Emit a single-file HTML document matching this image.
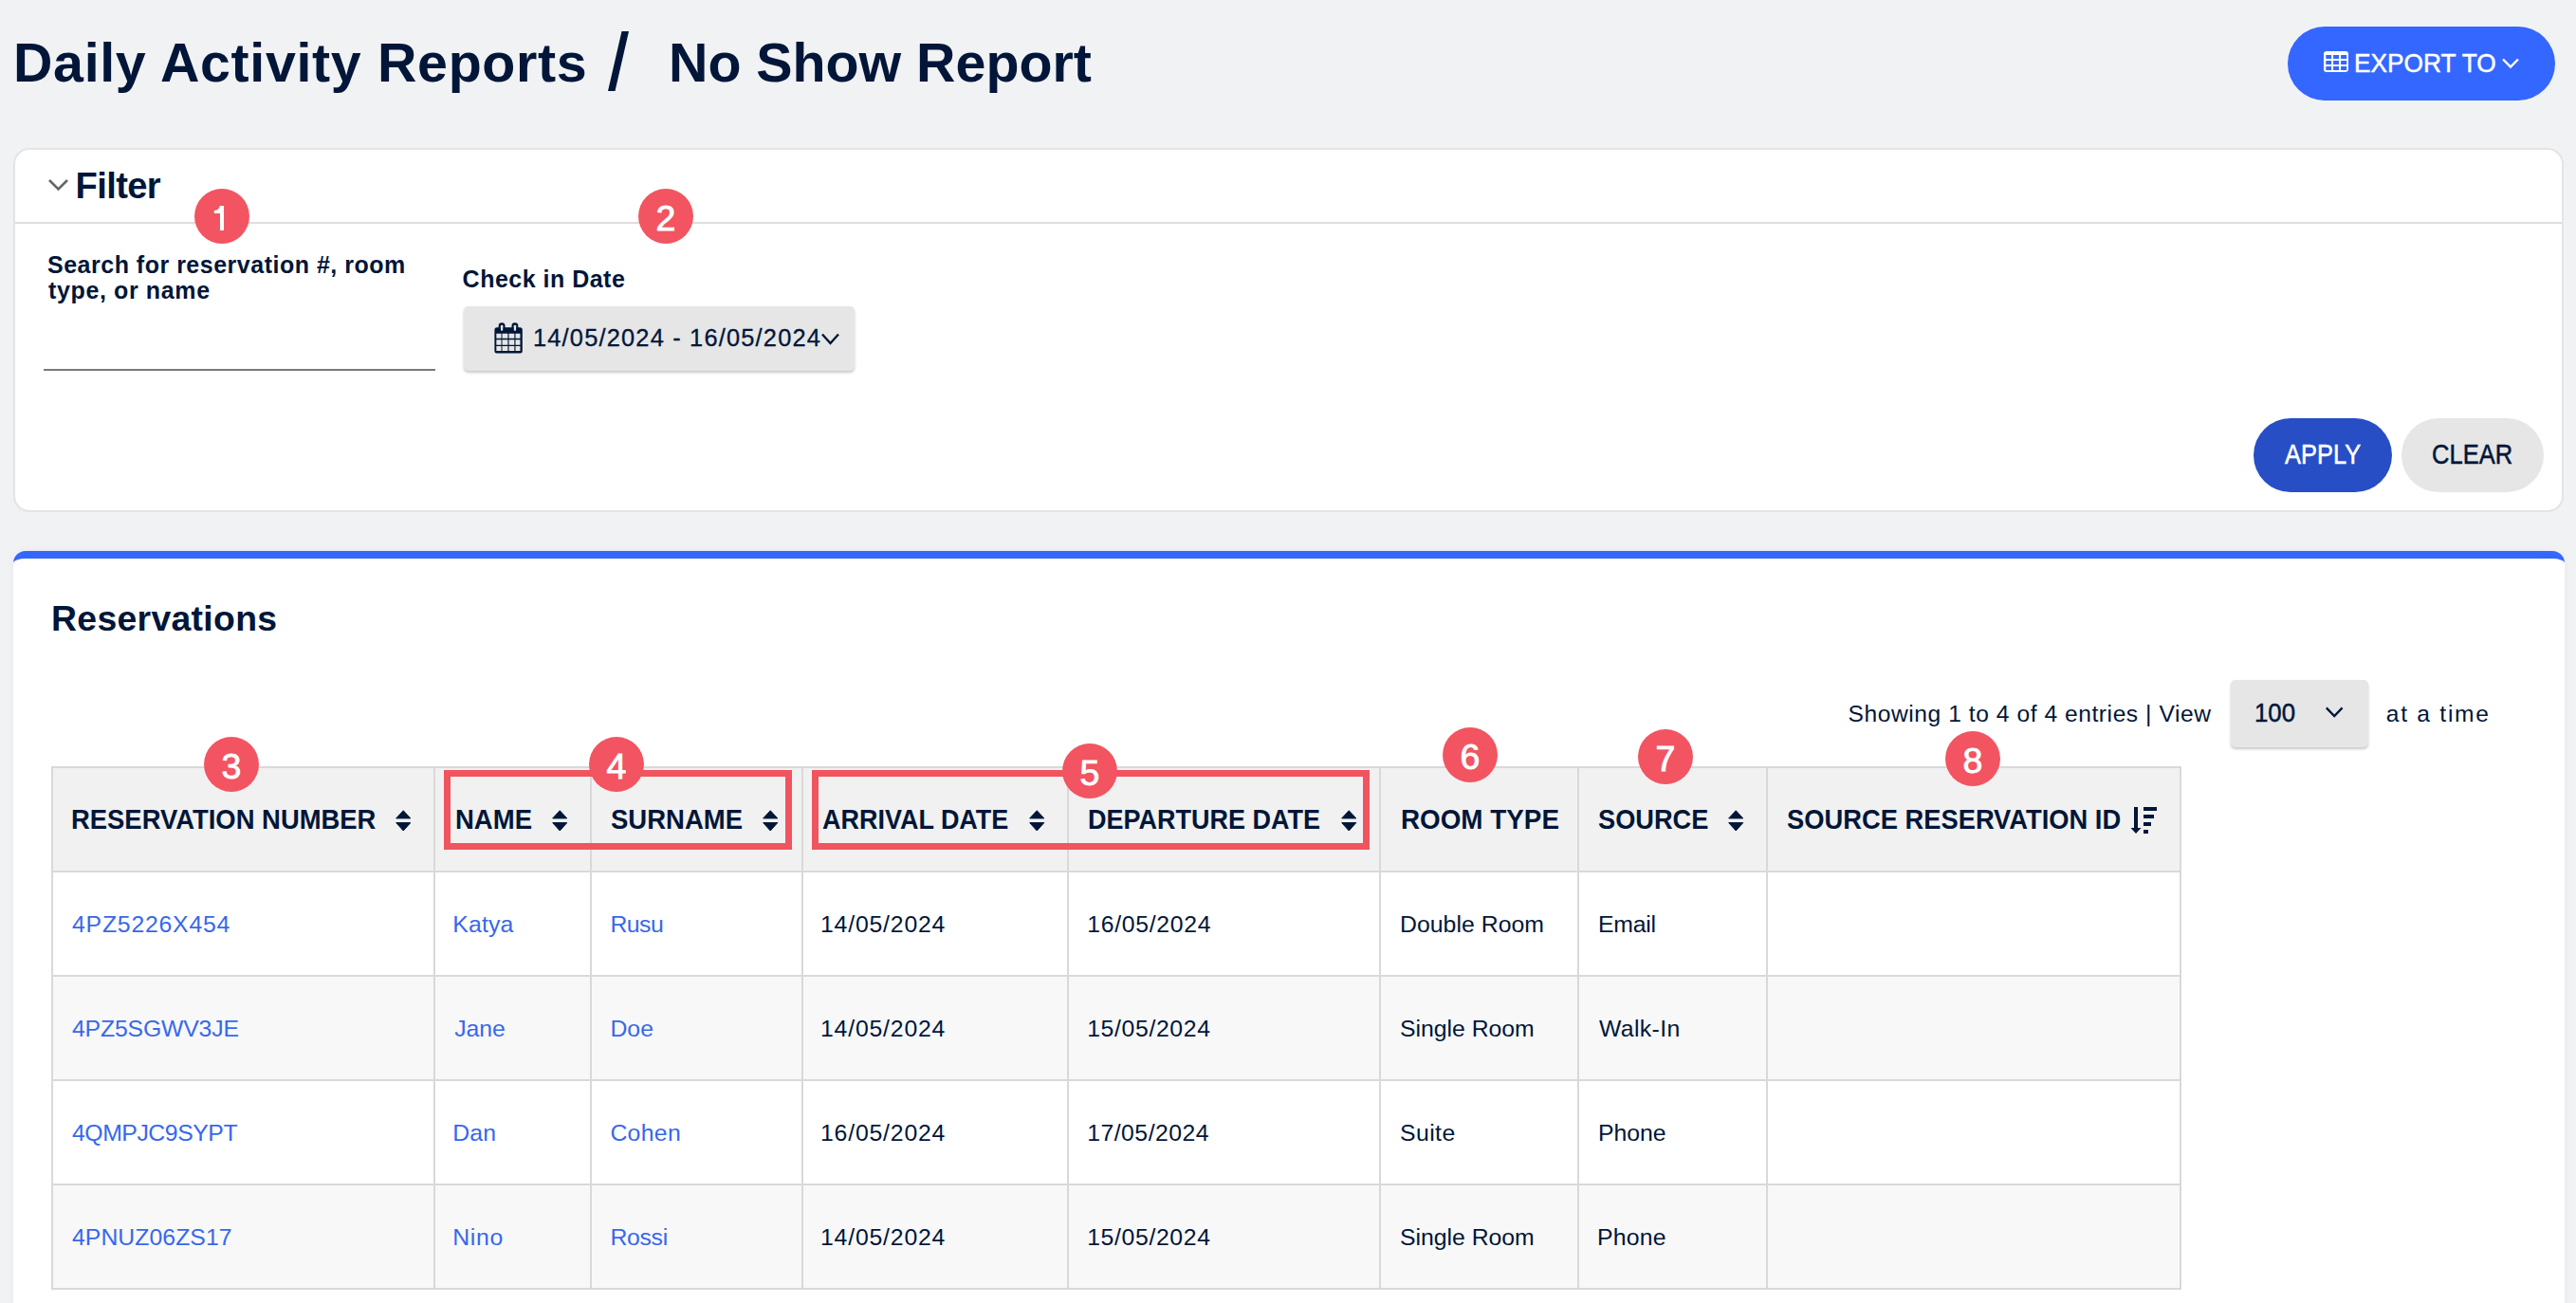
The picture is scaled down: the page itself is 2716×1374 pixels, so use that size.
<!DOCTYPE html>
<html><head><meta charset="utf-8"><style>
html,body{margin:0;padding:0;}
body{width:2716px;height:1374px;position:relative;overflow:hidden;background:#f1f2f4;font-family:"Liberation Sans",sans-serif;}
.t{position:absolute;white-space:nowrap;}
.abs{position:absolute;}
.badge{position:absolute;width:58px;height:58px;border-radius:50%;background:#f25461;}
</style></head><body>
<div class="t" style="left:14.00px;top:37.82px;font-size:57.39px;line-height:57.39px;letter-spacing:0.657px;font-weight:700;color:#011638;">Daily Activity Reports</div>
<div class="abs" style="left:641px;top:32.8px;width:22px;height:63px;"><svg width="22" height="63" viewBox="0 0 22 63"><polygon points="14.5,0 22,0 7.5,63 0,63" fill="#011638"/></svg></div>
<div class="t" style="left:705.00px;top:37.82px;font-size:57.39px;line-height:57.39px;letter-spacing:-0.031px;font-weight:700;color:#011638;">No Show Report</div>
<div class="abs" style="left:2412px;top:28px;width:282px;height:78px;border-radius:39px;background:#3467ff;"></div>
<svg class="abs" style="left:2449.7px;top:53.9px" width="26.1" height="21.9" viewBox="0 0 26.1 21.9"><path fill="#fff" fill-rule="evenodd" d="M3,0 H23.1 A3,3 0 0 1 26.1,3 V18.9 A3,3 0 0 1 23.1,21.9 H3 A3,3 0 0 1 0,18.9 V3 A3,3 0 0 1 3,0 Z M2.3,4.1 V8 H8.1 V4.1 Z M10.1,4.1 V8 H16.1 V4.1 Z M18.1,4.1 V8 H24.2 V4.1 Z M2.3,10.1 V14 H8.1 V10.1 Z M10.1,10.1 V14 H16.1 V10.1 Z M18.1,10.1 V14 H24.2 V10.1 Z M2.3,16.1 V20 H8.1 V16.1 Z M10.1,16.1 V20 H16.1 V16.1 Z M18.1,16.1 V20 H24.2 V16.1 Z"/></svg>
<div class="t" style="left:2482.00px;top:51.98px;font-size:28.26px;line-height:28.26px;letter-spacing:0.000px;font-weight:400;color:#fff;transform:scaleX(0.9288);transform-origin:0 0;-webkit-text-stroke:0.5px #fff;">EXPORT TO</div>
<svg class="abs" style="left:2637px;top:59px" width="20" height="15" viewBox="0 0 20 15"><polyline points="2,3.5 10,11.5 18,3.5" fill="none" stroke="#fff" stroke-width="2.4"/></svg>
<div class="abs" style="left:14px;top:156px;width:2685px;height:380px;border:2px solid #e3e4e6;border-radius:17px;background:#fff;"></div>
<div class="abs" style="left:16px;top:234px;width:2685px;height:2px;background:#dedede;"></div>
<svg class="abs" style="left:50px;top:186px" width="24" height="18" viewBox="0 0 24 18"><polyline points="2,4 11.5,13.5 21,4" fill="none" stroke="#666" stroke-width="2.6"/></svg>
<div class="t" style="left:79.60px;top:176.80px;font-size:38.12px;line-height:38.12px;letter-spacing:-0.620px;font-weight:700;color:#011638;">Filter</div>
<div class="t" style="left:50.00px;top:267.15px;font-size:25.00px;line-height:25.00px;letter-spacing:0.503px;font-weight:700;color:#011638;">Search for reservation #, room</div>
<div class="t" style="left:51.00px;top:293.65px;font-size:25.00px;line-height:25.00px;letter-spacing:0.625px;font-weight:700;color:#011638;">type, or name</div>
<div class="abs" style="left:46px;top:389px;width:413px;height:2px;background:#7a7a7a;"></div>
<div class="t" style="left:487.60px;top:282.45px;font-size:25.00px;line-height:25.00px;letter-spacing:0.492px;font-weight:700;color:#011638;">Check in Date</div>
<div class="abs" style="left:489px;top:323px;width:412px;height:68px;border-radius:5px;background:#e6e6e6;box-shadow:0 2px 3px rgba(0,0,0,0.22);"></div>
<svg class="abs" style="left:520.5px;top:340px" width="31" height="33" viewBox="0 0 31 33"><path fill="#011638" fill-rule="evenodd" d="M2.9,5.15 H27.3 A2.5,2.5 0 0 1 29.8,7.65 V29.9 A2.5,2.5 0 0 1 27.3,32.4 H2.9 A2.5,2.5 0 0 1 0.4,29.9 V7.65 A2.5,2.5 0 0 1 2.9,5.15 Z M2.35,11.86 H7.53 V16.85 H2.35 Z M8.49,11.86 H14.43 V16.85 H8.49 Z M15.58,11.86 H21.34 V16.85 H15.58 Z M22.49,11.86 H27.47 V16.85 H22.49 Z M2.35,18.19 H7.53 V23.75 H2.35 Z M8.49,18.19 H14.43 V23.75 H8.49 Z M15.58,18.19 H21.34 V23.75 H15.58 Z M22.49,18.19 H27.47 V23.75 H22.49 Z M2.35,25.1 H7.53 V29.9 H2.35 Z M8.49,25.1 H14.43 V29.9 H8.49 Z M15.58,25.1 H21.34 V29.9 H15.58 Z M22.49,25.1 H27.47 V29.9 H22.49 Z M6.8,5.15 H9.45 V8.8 H6.8 Z M20.6,5.15 H23.3 V8.8 H20.6 Z"/><path fill="#011638" fill-rule="evenodd" d="M8.100000000000001,0.36 A3.45,3.45 0 0 1 11.56,3.8 V6.2 A3,3 0 0 1 4.65,6.2 V3.8 A3.45,3.45 0 0 1 8.100000000000001,0.36 Z M7.9,2.85 A1.3,1.3 0 0 1 9.45,4.1 V7.8 A1.3,1.3 0 0 1 6.8,7.8 V4.1 A1.3,1.3 0 0 1 7.9,2.85 Z M21.91,0.36 A3.45,3.45 0 0 1 25.36,3.8 V6.2 A3,3 0 0 1 18.46,6.2 V3.8 A3.45,3.45 0 0 1 21.91,0.36 Z M21.95,2.85 A1.3,1.3 0 0 1 23.3,4.1 V7.8 A1.3,1.3 0 0 1 20.6,7.8 V4.1 A1.3,1.3 0 0 1 21.95,2.85 Z"/></svg>
<div class="t" style="left:562.00px;top:344.11px;font-size:25.40px;line-height:25.40px;letter-spacing:1.191px;font-weight:400;color:#011638;-webkit-text-stroke:0.3px #011638;">14/05/2024 - 16/05/2024</div>
<svg class="abs" style="left:864px;top:348px" width="22" height="18" viewBox="0 0 22 18"><polyline points="3,4.5 11.5,14 20,4.5" fill="none" stroke="#011638" stroke-width="2.4"/></svg>
<div class="abs" style="left:2376px;top:441px;width:146px;height:78px;border-radius:39px;background:#274ec5;"></div>
<div class="t" style="left:2409.00px;top:465.39px;font-size:28.84px;line-height:28.84px;letter-spacing:0.000px;font-weight:400;color:#fff;transform:scaleX(0.8820);transform-origin:0 0;-webkit-text-stroke:0.5px #fff;">APPLY</div>
<div class="abs" style="left:2532px;top:441px;width:150px;height:78px;border-radius:39px;background:#e6e6e6;"></div>
<div class="t" style="left:2564.00px;top:465.39px;font-size:28.84px;line-height:28.84px;letter-spacing:0.000px;font-weight:400;color:#011638;transform:scaleX(0.8854);transform-origin:0 0;-webkit-text-stroke:0.5px #011638;">CLEAR</div>
<div class="abs" style="left:14px;top:581px;width:2690px;height:900px;border-top:8px solid #3467ff;border-radius:13px;background:#fff;box-shadow:0 0 8px rgba(0,0,0,0.045);"></div>
<div class="t" style="left:54.00px;top:634.12px;font-size:37.39px;line-height:37.39px;letter-spacing:0.300px;font-weight:700;color:#011638;">Reservations</div>
<div class="t" style="left:1948.60px;top:740.79px;font-size:24.60px;line-height:24.60px;letter-spacing:0.552px;font-weight:400;color:#011638;">Showing 1 to 4 of 4 entries | View</div>
<div class="abs" style="left:2352px;top:717px;width:145px;height:71px;border-radius:5px;background:#e6e6e6;box-shadow:0 2px 3px rgba(0,0,0,0.22);"></div>
<div class="t" style="left:2377.00px;top:737.59px;font-size:27.54px;line-height:27.54px;letter-spacing:0.000px;font-weight:400;color:#011638;transform:scaleX(0.9368);transform-origin:0 0;-webkit-text-stroke:0.5px #011638;">100</div>
<svg class="abs" style="left:2450px;top:742px" width="22" height="18" viewBox="0 0 22 18"><polyline points="2.8,4.4 11.2,13.1 19.6,4.4" fill="none" stroke="#011638" stroke-width="2.3"/></svg>
<div class="t" style="left:2515.80px;top:741.09px;font-size:24.60px;line-height:24.60px;letter-spacing:1.737px;font-weight:400;color:#011638;">at a time</div>
<div class="abs" style="left:55px;top:809px;width:2244px;height:110px;background:#f1f1f1;"></div>
<div class="abs" style="left:55px;top:919px;width:2244px;height:110px;background:#ffffff;"></div>
<div class="abs" style="left:55px;top:1029px;width:2244px;height:110px;background:#f8f8f8;"></div>
<div class="abs" style="left:55px;top:1139px;width:2244px;height:110px;background:#ffffff;"></div>
<div class="abs" style="left:55px;top:1249px;width:2244px;height:110px;background:#f8f8f8;"></div>
<div class="abs" style="left:54px;top:808px;width:2246px;height:2px;background:#d9d9d9;"></div>
<div class="abs" style="left:54px;top:918px;width:2246px;height:2px;background:#d9d9d9;"></div>
<div class="abs" style="left:54px;top:1028px;width:2246px;height:2px;background:#d9d9d9;"></div>
<div class="abs" style="left:54px;top:1138px;width:2246px;height:2px;background:#d9d9d9;"></div>
<div class="abs" style="left:54px;top:1248px;width:2246px;height:2px;background:#d9d9d9;"></div>
<div class="abs" style="left:54px;top:1358px;width:2246px;height:2px;background:#d9d9d9;"></div>
<div class="abs" style="left:54px;top:808px;width:2px;height:552px;background:#d9d9d9;"></div>
<div class="abs" style="left:457px;top:808px;width:2px;height:552px;background:#d9d9d9;"></div>
<div class="abs" style="left:622px;top:808px;width:2px;height:552px;background:#d9d9d9;"></div>
<div class="abs" style="left:845px;top:808px;width:2px;height:552px;background:#d9d9d9;"></div>
<div class="abs" style="left:1125px;top:808px;width:2px;height:552px;background:#d9d9d9;"></div>
<div class="abs" style="left:1454px;top:808px;width:2px;height:552px;background:#d9d9d9;"></div>
<div class="abs" style="left:1663px;top:808px;width:2px;height:552px;background:#d9d9d9;"></div>
<div class="abs" style="left:1862px;top:808px;width:2px;height:552px;background:#d9d9d9;"></div>
<div class="abs" style="left:2298px;top:808px;width:2px;height:552px;background:#d9d9d9;"></div>
<div class="t" style="left:75.20px;top:850.31px;font-size:28.70px;line-height:28.70px;letter-spacing:0.000px;font-weight:700;color:#011638;transform:scaleX(0.9557);transform-origin:0 0;">RESERVATION NUMBER</div>
<svg class="abs" style="left:416.6px;top:853.5px" width="16.5" height="23" viewBox="0 0 16.5 23"><path fill="#011638" stroke="#011638" stroke-width="1" stroke-linejoin="round" d="M8.25,0.8 L15.8,8.9 H0.7 Z M0.7,13.6 H15.8 L8.25,22 Z"/></svg>
<div class="t" style="left:479.60px;top:850.31px;font-size:28.70px;line-height:28.70px;letter-spacing:0.000px;font-weight:700;color:#011638;transform:scaleX(0.9586);transform-origin:0 0;">NAME</div>
<svg class="abs" style="left:581.7px;top:853.5px" width="16.5" height="23" viewBox="0 0 16.5 23"><path fill="#011638" stroke="#011638" stroke-width="1" stroke-linejoin="round" d="M8.25,0.8 L15.8,8.9 H0.7 Z M0.7,13.6 H15.8 L8.25,22 Z"/></svg>
<div class="t" style="left:643.80px;top:850.31px;font-size:28.70px;line-height:28.70px;letter-spacing:0.000px;font-weight:700;color:#011638;transform:scaleX(0.9593);transform-origin:0 0;">SURNAME</div>
<svg class="abs" style="left:804px;top:853.5px" width="16.5" height="23" viewBox="0 0 16.5 23"><path fill="#011638" stroke="#011638" stroke-width="1" stroke-linejoin="round" d="M8.25,0.8 L15.8,8.9 H0.7 Z M0.7,13.6 H15.8 L8.25,22 Z"/></svg>
<div class="t" style="left:867.20px;top:850.31px;font-size:28.70px;line-height:28.70px;letter-spacing:0.000px;font-weight:700;color:#011638;transform:scaleX(0.9402);transform-origin:0 0;">ARRIVAL DATE</div>
<svg class="abs" style="left:1085px;top:853.5px" width="16.5" height="23" viewBox="0 0 16.5 23"><path fill="#011638" stroke="#011638" stroke-width="1" stroke-linejoin="round" d="M8.25,0.8 L15.8,8.9 H0.7 Z M0.7,13.6 H15.8 L8.25,22 Z"/></svg>
<div class="t" style="left:1146.80px;top:850.31px;font-size:28.70px;line-height:28.70px;letter-spacing:0.000px;font-weight:700;color:#011638;transform:scaleX(0.9416);transform-origin:0 0;">DEPARTURE DATE</div>
<svg class="abs" style="left:1414px;top:853.5px" width="16.5" height="23" viewBox="0 0 16.5 23"><path fill="#011638" stroke="#011638" stroke-width="1" stroke-linejoin="round" d="M8.25,0.8 L15.8,8.9 H0.7 Z M0.7,13.6 H15.8 L8.25,22 Z"/></svg>
<div class="t" style="left:1476.60px;top:850.31px;font-size:28.70px;line-height:28.70px;letter-spacing:0.000px;font-weight:700;color:#011638;transform:scaleX(0.9698);transform-origin:0 0;">ROOM TYPE</div>
<div class="t" style="left:1685.00px;top:850.31px;font-size:28.70px;line-height:28.70px;letter-spacing:0.000px;font-weight:700;color:#011638;transform:scaleX(0.9479);transform-origin:0 0;">SOURCE</div>
<svg class="abs" style="left:1822px;top:853.5px" width="16.5" height="23" viewBox="0 0 16.5 23"><path fill="#011638" stroke="#011638" stroke-width="1" stroke-linejoin="round" d="M8.25,0.8 L15.8,8.9 H0.7 Z M0.7,13.6 H15.8 L8.25,22 Z"/></svg>
<div class="t" style="left:1884.00px;top:850.31px;font-size:28.70px;line-height:28.70px;letter-spacing:0.000px;font-weight:700;color:#011638;transform:scaleX(0.9524);transform-origin:0 0;">SOURCE RESERVATION ID</div>
<svg class="abs" style="left:2246px;top:851px" width="29" height="29" viewBox="0 0 29 29"><path fill="#011638" d="M4,0 H8 V22 H11.5 L6,28 L0.5,22 H4 Z M14,0 H28 V4 H14 Z M14,8 H25 V12 H14 Z M14,16 H22 V20 H14 Z M14,24 H19 V28 H14 Z"/></svg>
<div class="t" style="left:76.00px;top:962.92px;font-size:24.80px;line-height:24.80px;letter-spacing:0.780px;font-weight:400;color:#3768ec;">4PZ5226X454</div>
<div class="t" style="left:477.20px;top:962.92px;font-size:24.80px;line-height:24.80px;letter-spacing:0.200px;font-weight:400;color:#3768ec;">Katya</div>
<div class="t" style="left:643.40px;top:962.92px;font-size:24.80px;line-height:24.80px;letter-spacing:-0.500px;font-weight:400;color:#3768ec;">Rusu</div>
<div class="t" style="left:865.00px;top:962.92px;font-size:24.80px;line-height:24.80px;letter-spacing:0.811px;font-weight:400;color:#011638;">14/05/2024</div>
<div class="t" style="left:1146.20px;top:962.92px;font-size:24.80px;line-height:24.80px;letter-spacing:0.700px;font-weight:400;color:#011638;">16/05/2024</div>
<div class="t" style="left:1476.00px;top:962.92px;font-size:24.80px;line-height:24.80px;letter-spacing:0.040px;font-weight:400;color:#011638;">Double Room</div>
<div class="t" style="left:1685.00px;top:962.92px;font-size:24.80px;line-height:24.80px;letter-spacing:-0.250px;font-weight:400;color:#011638;">Email</div>
<div class="t" style="left:76.00px;top:1072.92px;font-size:24.80px;line-height:24.80px;letter-spacing:-0.180px;font-weight:400;color:#3768ec;">4PZ5SGWV3JE</div>
<div class="t" style="left:479.20px;top:1072.92px;font-size:24.80px;line-height:24.80px;letter-spacing:-0.067px;font-weight:400;color:#3768ec;">Jane</div>
<div class="t" style="left:643.40px;top:1072.92px;font-size:24.80px;line-height:24.80px;letter-spacing:0.050px;font-weight:400;color:#3768ec;">Doe</div>
<div class="t" style="left:865.00px;top:1072.92px;font-size:24.80px;line-height:24.80px;letter-spacing:0.811px;font-weight:400;color:#011638;">14/05/2024</div>
<div class="t" style="left:1146.20px;top:1072.92px;font-size:24.80px;line-height:24.80px;letter-spacing:0.633px;font-weight:400;color:#011638;">15/05/2024</div>
<div class="t" style="left:1476.00px;top:1072.92px;font-size:24.80px;line-height:24.80px;letter-spacing:-0.020px;font-weight:400;color:#011638;">Single Room</div>
<div class="t" style="left:1686.00px;top:1072.92px;font-size:24.80px;line-height:24.80px;letter-spacing:0.350px;font-weight:400;color:#011638;">Walk-In</div>
<div class="t" style="left:76.00px;top:1182.92px;font-size:24.80px;line-height:24.80px;letter-spacing:-0.460px;font-weight:400;color:#3768ec;">4QMPJC9SYPT</div>
<div class="t" style="left:477.20px;top:1182.92px;font-size:24.80px;line-height:24.80px;letter-spacing:0.150px;font-weight:400;color:#3768ec;">Dan</div>
<div class="t" style="left:643.40px;top:1182.92px;font-size:24.80px;line-height:24.80px;letter-spacing:0.325px;font-weight:400;color:#3768ec;">Cohen</div>
<div class="t" style="left:865.00px;top:1182.92px;font-size:24.80px;line-height:24.80px;letter-spacing:0.811px;font-weight:400;color:#011638;">16/05/2024</div>
<div class="t" style="left:1146.20px;top:1182.92px;font-size:24.80px;line-height:24.80px;letter-spacing:0.478px;font-weight:400;color:#011638;">17/05/2024</div>
<div class="t" style="left:1476.00px;top:1182.92px;font-size:24.80px;line-height:24.80px;letter-spacing:0.425px;font-weight:400;color:#011638;">Suite</div>
<div class="t" style="left:1685.00px;top:1182.92px;font-size:24.80px;line-height:24.80px;letter-spacing:-0.025px;font-weight:400;color:#011638;">Phone</div>
<div class="t" style="left:76.00px;top:1292.92px;font-size:24.80px;line-height:24.80px;letter-spacing:0.040px;font-weight:400;color:#3768ec;">4PNUZ06ZS17</div>
<div class="t" style="left:477.20px;top:1292.92px;font-size:24.80px;line-height:24.80px;letter-spacing:0.667px;font-weight:400;color:#3768ec;">Nino</div>
<div class="t" style="left:643.40px;top:1292.92px;font-size:24.80px;line-height:24.80px;letter-spacing:-0.300px;font-weight:400;color:#3768ec;">Rossi</div>
<div class="t" style="left:865.00px;top:1292.92px;font-size:24.80px;line-height:24.80px;letter-spacing:0.811px;font-weight:400;color:#011638;">14/05/2024</div>
<div class="t" style="left:1146.20px;top:1292.92px;font-size:24.80px;line-height:24.80px;letter-spacing:0.633px;font-weight:400;color:#011638;">15/05/2024</div>
<div class="t" style="left:1476.00px;top:1292.92px;font-size:24.80px;line-height:24.80px;letter-spacing:-0.020px;font-weight:400;color:#011638;">Single Room</div>
<div class="t" style="left:1684.00px;top:1292.92px;font-size:24.80px;line-height:24.80px;letter-spacing:0.225px;font-weight:400;color:#011638;">Phone</div>
<div class="abs" style="left:467.4px;top:812px;width:854.3px;height:0;"></div>
<div class="abs" style="left:467.5px;top:812px;width:353px;height:70px;border:7px solid #f0545f;"></div>
<div class="abs" style="left:855.5px;top:811.6px;width:574.5px;height:70px;border:7px solid #f0545f;"></div>
<div class="badge" style="left:205px;top:199px;"></div>
<svg class="abs" style="left:214px;top:208px" width="40" height="40" viewBox="0 0 40 40"><path fill="#fff" d="M17.96,8.9 H22.04 V35 H17.96 V16.9 H11.8 V14 C14.6,14 16.8,12.6 17.96,8.9 Z"/></svg>
<div class="badge" style="left:673px;top:199px;"></div>
<div class="t" style="left:691.55px;top:211.86px;font-size:37.5px;line-height:37.5px;color:#fff;-webkit-text-stroke:0.9px #fff;">2</div>
<div class="badge" style="left:215px;top:777px;"></div>
<div class="t" style="left:233.55px;top:789.86px;font-size:37.5px;line-height:37.5px;color:#fff;-webkit-text-stroke:0.9px #fff;">3</div>
<div class="badge" style="left:621px;top:777px;"></div>
<div class="t" style="left:639.55px;top:789.86px;font-size:37.5px;line-height:37.5px;color:#fff;-webkit-text-stroke:0.9px #fff;">4</div>
<div class="badge" style="left:1120px;top:784px;"></div>
<div class="t" style="left:1138.55px;top:796.86px;font-size:37.5px;line-height:37.5px;color:#fff;-webkit-text-stroke:0.9px #fff;">5</div>
<div class="badge" style="left:1521px;top:767px;"></div>
<div class="t" style="left:1539.55px;top:779.86px;font-size:37.5px;line-height:37.5px;color:#fff;-webkit-text-stroke:0.9px #fff;">6</div>
<div class="badge" style="left:1727px;top:769px;"></div>
<div class="t" style="left:1745.55px;top:781.86px;font-size:37.5px;line-height:37.5px;color:#fff;-webkit-text-stroke:0.9px #fff;">7</div>
<div class="badge" style="left:2051px;top:771px;"></div>
<div class="t" style="left:2069.55px;top:783.86px;font-size:37.5px;line-height:37.5px;color:#fff;-webkit-text-stroke:0.9px #fff;">8</div>
</body></html>
